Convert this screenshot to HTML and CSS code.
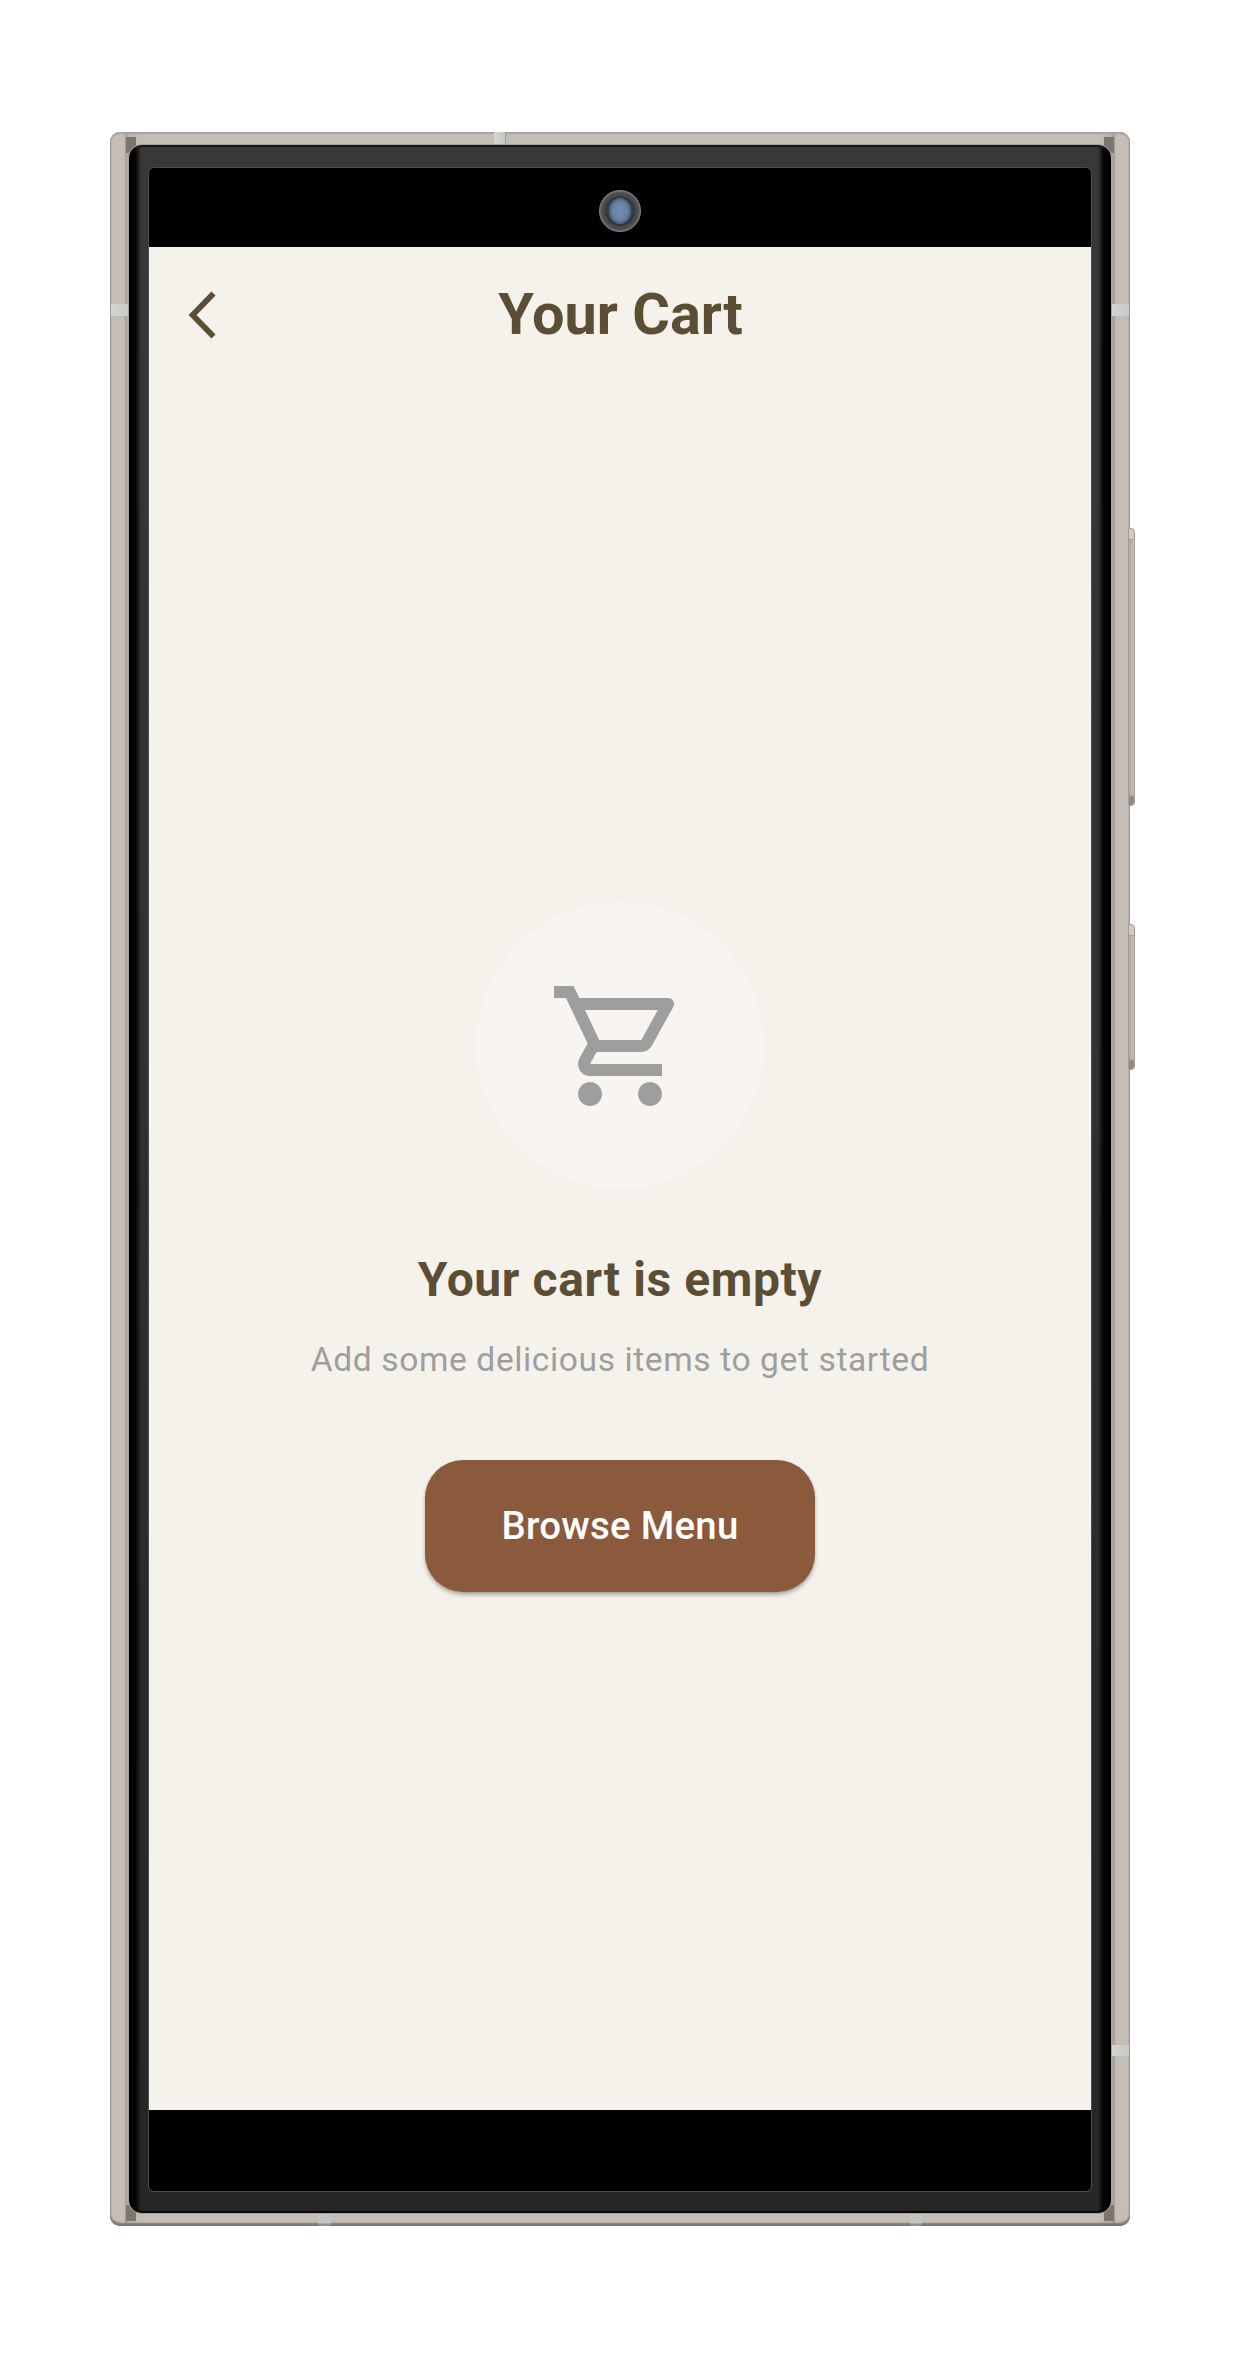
FILE: index.html
```html
<!DOCTYPE html>
<html lang="en">
<head>
<meta charset="utf-8">
<title>Your Cart</title>
<link rel="stylesheet" href="styles.css">
</head>
<body>
<div class="phone">
  <span class="side-key side-key-volume"></span>
  <span class="side-key side-key-power"></span>
  <span class="corner corner-tl"></span>
  <span class="corner corner-tr"></span>
  <span class="corner corner-bl"></span>
  <span class="corner corner-br"></span>
  <span class="antenna antenna-top"></span>
  <span class="antenna antenna-left"></span>
  <span class="antenna antenna-right"></span>
  <span class="antenna antenna-right-low"></span>
  <span class="antenna antenna-bottom-left"></span>
  <span class="antenna antenna-bottom-right"></span>
  <div class="bezel">
    <div class="display">
      <div class="status-bar"><span class="camera"></span></div>
      <div class="screen">
        <header class="app-bar">
          <svg class="back" viewBox="0 0 28 48" aria-label="Back"><path d="M25.5 2.4 4.6 24 25.5 45.6" fill="none" stroke="#5c4d35" stroke-width="5.8"/></svg>
          <h1 class="title">Your Cart</h1>
        </header>
        <main class="empty">
          <div class="empty-icon">
            <svg class="cart" viewBox="0 0 24 24"><path fill="#9e9e9e" d="M15.55 13c.75 0 1.41-.41 1.75-1.03l3.58-6.49A.996.996 0 0 0 20.01 4H5.21l-.94-2H1v2h2l3.6 7.59-1.35 2.44C4.52 15.37 5.48 17 7 17h12v-2H7l1.1-2h7.45zM6.16 6h12.15l-2.76 5H8.53L6.16 6zM7 18c-1.1 0-1.99.9-1.99 2S5.9 22 7 22s2-.9 2-2-.9-2-2-2zm10 0c-1.1 0-1.99.9-1.99 2s.89 2 1.99 2 2-.9 2-2-.9-2-2-2z"/></svg>
          </div>
          <h2 class="empty-title">Your cart is empty</h2>
          <p class="empty-text">Add some delicious items to get started</p>
          <button class="browse" type="button">Browse Menu</button>
        </main>
      </div>
    </div>
  </div>
</div>
</body>
</html>
```
FILE: styles.css
```css
* { box-sizing: border-box; }

body {
  margin: 0;
  padding: 132px 0 0 110px;
  height: 2359px;
  background: #fff;
  font-family: Roboto, "Liberation Sans", sans-serif;
}

/* Device frame */
.phone {
  position: relative;
  width: 1020px;
  height: 2094px;
  padding: 13px 19px;
  border-radius: 10px;
  background: linear-gradient(90deg, #b5b0aa 0, #c4beb7 3px, #c4beb7 14px, #a39d94 16px, #bcb5ac 18px, #c4beb7 30px, #c4beb7 990px, #bab1a8 1001px, #a39d94 1004px, #c4beb7 1006px, #c4beb7 1017px, #b0aaa3 1020px);
  box-shadow: inset 0 2px 1px #aaa49e, inset 0 -3px 2px #7d756c, inset 0 0 1px 1px #a9a49c;
}

.side-key {
  position: absolute;
  left: 1018px;
  width: 7px;
  border: 1px solid #a39d95;
  border-radius: 0 4px 4px 0;
  background:
    linear-gradient(#d0cbc4 0 10px, #a9a39b 10px 11px, transparent 11px) no-repeat,
    linear-gradient(0deg, #8f8981 0 8px, transparent 10px) no-repeat,
    linear-gradient(90deg, #aca59e, #c8c2bb);
}
.side-key-volume { top: 396px; height: 278px; }
.side-key-power { top: 792px; height: 146px; }

.corner { position: absolute; width: 10px; height: 16px; background: #7b756d; }
.corner-tl { left: 16px; top: 5px; }
.corner-tr { right: 16px; top: 5px; }
.corner-bl { left: 16px; bottom: 5px; }
.corner-br { right: 16px; bottom: 5px; }

.antenna { position: absolute; background: linear-gradient(90deg, #d4d4d3, #c9c9c8); }
.antenna-top { left: 384px; top: 0; width: 12px; height: 13px; border-right: 1px solid #a5a19c; }
.antenna-left { left: 1px; top: 172px; width: 18px; height: 12px; }
.antenna-right { right: 1px; top: 172px; width: 18px; height: 12px; }
.antenna-right-low { right: 1px; top: 1913px; width: 18px; height: 11px; }
.antenna-bottom-left { left: 208px; bottom: 0; width: 13px; height: 13px; background: linear-gradient(#c4c4c3 10px, #96928f 11px); }
.antenna-bottom-right { left: 800px; bottom: 0; width: 12px; height: 13px; background: linear-gradient(#c4c4c3 10px, #96928f 11px); }

.bezel {
  position: relative;
  width: 982px;
  height: 2068px;
  padding: 23px 20px 22px;
  border-radius: 13px;
  background:
    linear-gradient(90deg, #000 0, #000 6px, transparent 12px, transparent 969px, #000 975px),
    linear-gradient(#383838, #262626);
  box-shadow: 0 0 0 1px #aaa49c, inset 0 2px 1px #181818, inset 0 -2px 1px #080808;
}

.display {
  height: 2023px;
  display: flex;
  flex-direction: column;
  border-radius: 5px;
  background: #000;
  box-shadow: 0 0 0 1px #4c4d4c;
}

.status-bar {
  height: 79px;
  padding-top: 22px;
  display: flex;
  justify-content: center;
}

.camera {
  width: 42px;
  height: 42px;
  border: 1px solid #858585;
  border-radius: 50%;
  background: radial-gradient(ellipse 11px 13px, #6f8faf 0, #6683a2 70%, #4a5c73 100%, transparent 100%),
    radial-gradient(circle, #333a43 0 11px, #3d4149 12px, #30343a 14px, #484b4f 16px, #4b4c4e 18px, #696969 20px);
}

/* App */
.screen {
  height: 1863px;
  display: flex;
  flex-direction: column;
  background: #f5f2eb;
  color: #5c4d35;
}

.app-bar {
  height: 136px;
  padding-left: 39px;
  display: grid;
  grid-template-columns: 28px 1fr 66px;
  align-items: center;
}
.back { width: 28px; height: 48px; }
.title { margin: 0; text-align: center; font-size: 57.6px; font-weight: 700; line-height: 68px; }

.empty {
  padding-top: 519px;
  display: flex;
  flex-direction: column;
  align-items: center;
}
.empty-icon {
  width: 288px;
  height: 287px;
  border-radius: 50%;
  display: grid;
  place-items: center;
  background: #f8f5f0;
}
.cart { width: 144px; height: 144px; }
.empty-title { margin: 62px 0 0; font-size: 48px; font-weight: 700; line-height: 58px; letter-spacing: .6px; }
.empty-text { margin: 27px 0 0; font-size: 33.6px; line-height: 48px; letter-spacing: .6px; color: #9e9e9e; }
.browse {
  width: 390px;
  height: 132px;
  margin-top: 76px;
  padding: 0;
  border: 0;
  border-radius: 38px;
  background: #8b5a3c;
  color: #fff;
  font: 500 38.4px/46px Roboto, "Liberation Sans", sans-serif;
  letter-spacing: .24px;
  box-shadow: 0 3px 4px rgba(0, 0, 0, .28), 0 1px 2px rgba(0, 0, 0, .1);
}
```
